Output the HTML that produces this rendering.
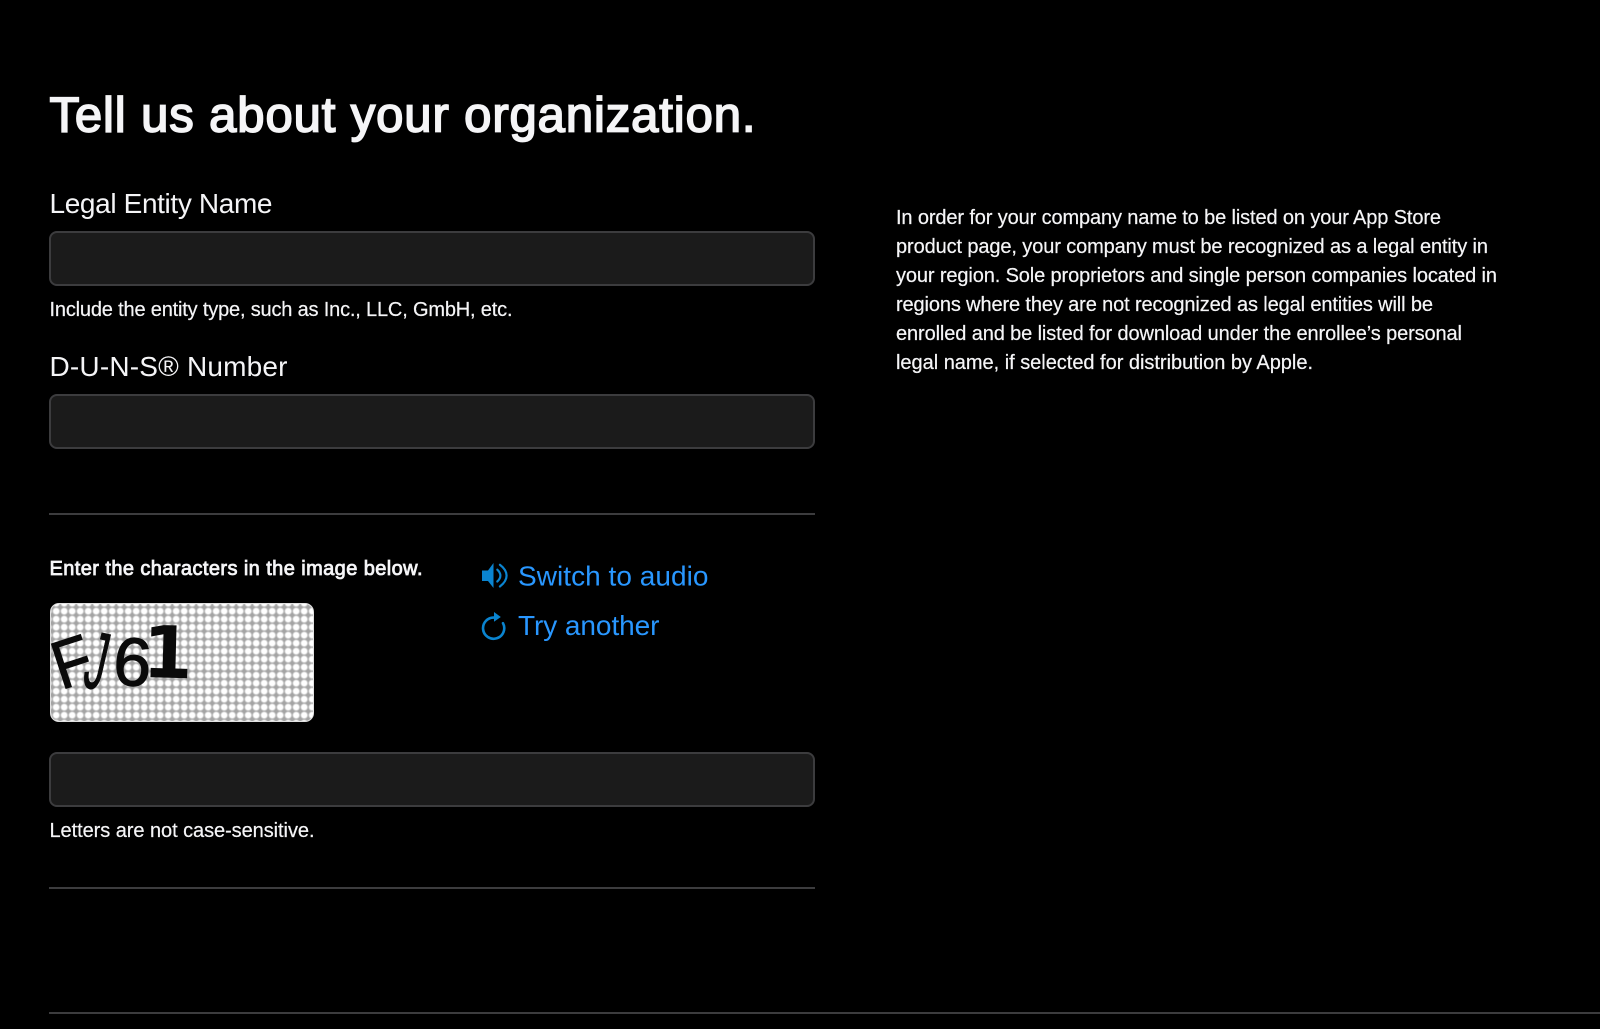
<!DOCTYPE html>
<html lang="en">
<head>
<meta charset="utf-8">
<title>Tell us about your organization.</title>
<style>
html,body{margin:0;padding:0;background:#000;width:1600px;height:1029px;overflow:hidden}
body{position:relative;font-family:"Liberation Sans",sans-serif}
.input{position:absolute;left:49px;width:766px;height:55px;box-sizing:border-box;background:#1b1b1b;border:2px solid #3c3c3e;border-radius:8px}
.rule{position:absolute;left:49px;width:766px;height:2px;background:#3c3c3e}
.captcha{position:absolute;left:50px;top:603px;width:264px;height:119px;box-sizing:border-box;border:1.5px solid #e2e2e2;border-radius:9px;overflow:hidden;background-color:#a4a4a4;background-image:radial-gradient(circle at 4px 4px,#fff 0,#fff 2.5px,#dcdcdc 3.1px,#a4a4a4 4.2px);background-size:8px 8px;background-position:1.2px 3.2px}
svg.layer{position:absolute;left:0;top:0}
text{font-family:"Liberation Sans",sans-serif}
</style>
</head>
<body>
<div class="input" style="top:230.5px"></div>
<div class="input" style="top:394px"></div>
<div class="input" style="top:752px"></div>
<div class="rule" style="top:513px"></div>
<div class="rule" style="top:887px"></div>
<div class="rule" style="top:1011.5px;width:1551px"></div>
<div class="captcha"></div>
<svg class="layer" width="1600" height="1029" viewBox="0 0 1600 1029" xmlns="http://www.w3.org/2000/svg">
  <text x="49.5" y="131.5" font-size="49" fill="#f5f5f7" stroke="#f5f5f7" stroke-width="1.7" textLength="706" lengthAdjust="spacing">Tell us about your organization.</text>
  <text x="49.5" y="213" font-size="28" fill="#f5f5f7" textLength="223" lengthAdjust="spacing">Legal Entity Name</text>
  <text x="49.5" y="316" font-size="20" fill="#f5f5f7" stroke="#f5f5f7" stroke-width="0.2" textLength="463" lengthAdjust="spacing">Include the entity type, such as Inc., LLC, GmbH, etc.</text>
  <text x="49.5" y="376" font-size="28" fill="#f5f5f7" textLength="238" lengthAdjust="spacing">D-U-N-S® Number</text>
  <text x="49.5" y="575" font-size="20" fill="#f5f5f7" stroke="#f5f5f7" stroke-width="0.8" textLength="373" lengthAdjust="spacing">Enter the characters in the image below.</text>
  <text x="49.5" y="837" font-size="20" fill="#f5f5f7" stroke="#f5f5f7" stroke-width="0.2" textLength="265" lengthAdjust="spacing">Letters are not case-sensitive.</text>

  <text x="518" y="585.5" font-size="28" fill="#2997ff" textLength="190.5" lengthAdjust="spacing">Switch to audio</text>
  <text x="518" y="635" font-size="28" fill="#2997ff" textLength="141.5" lengthAdjust="spacing">Try another</text>

  <g fill="#f5f5f7" stroke="#f5f5f7" stroke-width="0.2" font-size="20">
    <text x="896" y="224" textLength="545" lengthAdjust="spacing">In order for your company name to be listed on your App Store</text>
    <text x="896" y="253" textLength="592" lengthAdjust="spacing">product page, your company must be recognized as a legal entity in</text>
    <text x="896" y="282" textLength="601" lengthAdjust="spacing">your region. Sole proprietors and single person companies located in</text>
    <text x="896" y="311" textLength="537" lengthAdjust="spacing">regions where they are not recognized as legal entities will be</text>
    <text x="896" y="340" textLength="566" lengthAdjust="spacing">enrolled and be listed for download under the enrollee’s personal</text>
    <text x="896" y="369" textLength="417" lengthAdjust="spacing">legal name, if selected for distribution by Apple.</text>
  </g>

  <!-- captcha glyphs -->
  <g fill="#0a0a0a" stroke="#0a0a0a">
    <text transform="translate(61,690) rotate(-18) scale(.92,1)" font-size="68" stroke-width="1">F</text>
    <text transform="translate(81,686) rotate(13) scale(.5,1)" font-size="82" stroke-width="1">J</text>
    <text transform="translate(112,684) rotate(4)" font-size="68" stroke-width="1.2">6</text>
    <text transform="translate(142,677) rotate(1.5)" font-size="72" font-weight="700" stroke="none" style="font-family:'DejaVu Sans',sans-serif">1</text>
  </g>

  <!-- speaker icon -->
  <path d="M482 570.5H488L493.5 563V588L488 581H482Z" fill="#0a84d0"/>
  <path d="M497.3 569.7C501.4 573.5 501.4 577.8 497.3 581.5" fill="none" stroke="#0a84d0" stroke-width="2.2" stroke-linecap="round"/>
  <path d="M499.9 564.8C508.8 571.5 508.8 579.8 499.9 586.5" fill="none" stroke="#0a84d0" stroke-width="2.2" stroke-linecap="round"/>

  <!-- refresh icon -->
  <path d="M494.5 617.6A10.6 10.6 0 1 0 503 623.2" fill="none" stroke="#0a84d0" stroke-width="2.6" stroke-linecap="round"/>
  <path d="M494 612L500.8 617L494 621.8Z" fill="#0a84d0"/>
</svg>
</body>
</html>
